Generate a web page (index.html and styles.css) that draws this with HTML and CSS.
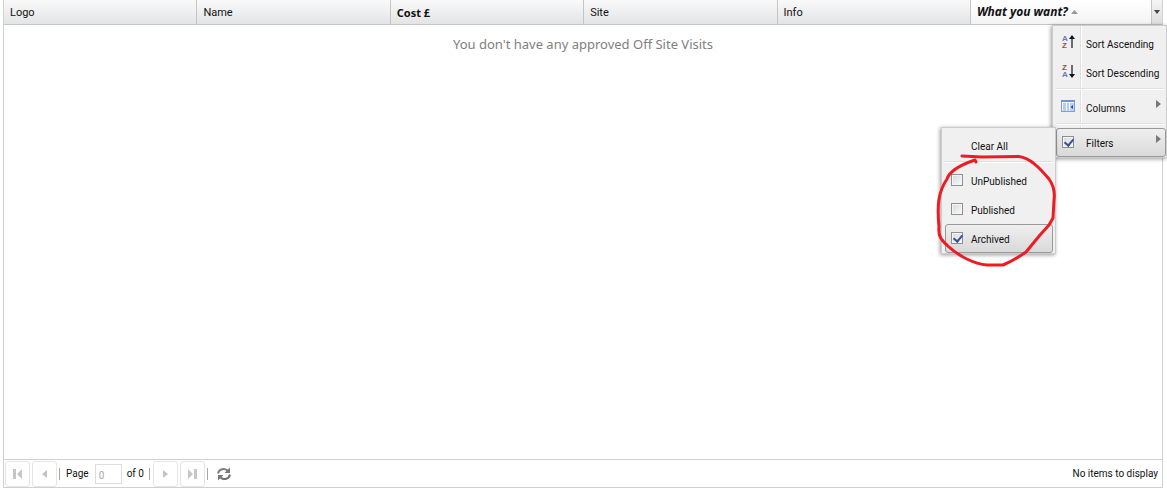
FILE: index.html
```html
<!DOCTYPE html>
<html lang="en">
<head>
  <meta charset="utf-8">
  <title>Off Site Visits</title>
  <link rel="stylesheet" href="styles.css">
</head>
<body>
  <div class="grid">
    <table class="grid-header">
      <thead>
        <tr>
          <th>Logo</th>
          <th>Name</th>
          <th class="bold">Cost £</th>
          <th>Site</th>
          <th>Info</th>
          <th class="sorted">
            <div class="sorted-inner">
              <span>What you want?</span>
              <svg class="sort-arrow" width="7" height="4" viewBox="0 0 7 4"><path d="M0 4L3.500 0L7 4Z" fill="#999"/></svg>
              <button class="trigger" aria-label="Column menu">
                <svg width="6" height="4" viewBox="0 0 6 4"><path d="M0 0H6L3 4Z" fill="#444"/></svg>
              </button>
            </div>
          </th>
        </tr>
      </thead>
    </table>

    <div class="grid-body">You don't have any approved Off Site Visits</div>

    <div class="paging">
      <button class="page-btn" aria-label="First page" disabled>
        <svg width="10" height="10" viewBox="0 0 10 10"><path d="M0 0H3V10H0ZM9 0V10L4 5Z" fill="#c6c6c6"/></svg>
      </button>
      <button class="page-btn" aria-label="Previous page" disabled>
        <svg width="10" height="10" viewBox="0 0 10 10"><path d="M7 1V9L2 5Z" fill="#c3c3c3"/></svg>
      </button>
      <span class="divider"></span>
      <label class="page-label" for="page">Page</label>
      <input class="page-input" id="page" type="text" value="0" disabled>
      <span class="page-total">of 0</span>
      <span class="divider"></span>
      <button class="page-btn" aria-label="Next page" disabled>
        <svg width="10" height="10" viewBox="0 0 10 10"><path d="M3 1V9L8 5Z" fill="#c3c3c3"/></svg>
      </button>
      <button class="page-btn" aria-label="Last page" disabled>
        <svg width="10" height="10" viewBox="0 0 10 10"><path d="M1 0V10L6 5ZM7 0H10V10H7Z" fill="#c6c6c6"/></svg>
      </button>
      <span class="divider"></span>
      <button class="refresh" aria-label="Refresh">
        <svg width="14" height="14" viewBox="0 0 14 14">
          <path d="M1 6.500C2 2 7 0.500 10.500 3.500" fill="none" stroke="#808080" stroke-width="2"/>
          <path d="M13 0.500V6H7.500Z" fill="#777"/>
          <path d="M13 7.500C12 12 7 13.500 3.500 10.500" fill="none" stroke="#707070" stroke-width="2"/>
          <path d="M1 13.500V8H6.500Z" fill="#777"/>
        </svg>
      </button>
      <span class="status">No items to display</span>
    </div>

    <div class="menu column-menu">
      <button class="item">
        <svg class="icon" width="14" height="16" viewBox="0 0 14 16" aria-hidden="true">
          <text class="letter-a" x="1" y="7">A</text>
          <text class="letter-z" x="1" y="14">Z</text>
          <path d="M11 14V3" stroke="#223" stroke-width="1.300"/>
          <path d="M8 5L11 1L14 5Z" fill="#112"/>
        </svg>
        <span>Sort Ascending</span>
      </button>
      <button class="item">
        <svg class="icon" width="14" height="16" viewBox="0 0 14 16" aria-hidden="true">
          <text class="letter-z" x="1" y="7">Z</text>
          <text class="letter-a" x="1" y="14">A</text>
          <path d="M11 2V13" stroke="#223" stroke-width="1.300"/>
          <path d="M8 11H14L11 15Z" fill="#112"/>
        </svg>
        <span>Sort Descending</span>
      </button>
      <div class="separator"></div>
      <button class="item">
        <svg class="icon" width="14" height="12" viewBox="0 0 14 12">
          <rect x="0.500" y="0.500" width="13" height="11" fill="#f4f8ff" stroke="#7f9fe0"/>
          <path d="M0 0H14V2H0Z" fill="#6f92d8"/>
          <path d="M2 4H5M2 6H5M2 8H5M2 10H5M6 4H8M6 6H8M6 8H8M6 10H8" stroke="#7f9bdc"/>
          <path d="M9 3H13V11H9Z" fill="#bcd0f6"/>
          <path d="M12 5V9L9.500 7Z" fill="#2b4fa5"/>
        </svg>
        <span>Columns</span>
        <svg class="more" width="5" height="8" viewBox="0 0 5 8"><path d="M0 0L5 4L0 8Z" fill="#777"/></svg>
      </button>
      <div class="separator"></div>
      <label class="item active">
        <input class="check" type="checkbox" checked>
        <span>Filters</span>
        <svg class="more" width="5" height="8" viewBox="0 0 5 8"><path d="M0 0L5 4L0 8Z" fill="#777"/></svg>
      </label>

      <div class="menu filter-menu">
        <button class="item no-icon"><span>Clear All</span></button>
        <div class="separator"></div>
        <label class="item"><input class="check" type="checkbox"><span>UnPublished</span></label>
        <label class="item"><input class="check" type="checkbox"><span>Published</span></label>
        <label class="item active"><input class="check" type="checkbox" checked><span>Archived</span></label>
        <svg class="marker" width="122" height="116" viewBox="0 0 122 116">
          <path d="M26 6L46 7L83 6.500C94 8 103 17 113 29C118 36 119 43 118 50L117 68L113 75L104 85L90 102C80 109 74 112 67 115H51C38 114 23 106 13 97C5 90 2 86 3 77C1 56 2 42 11 29C14 20 27 14 39 10L40 12" fill="none" stroke="#ed1c24" stroke-width="3" stroke-linecap="round" stroke-linejoin="round"/>
        </svg>
      </div>
    </div>
  </div>
</body>
</html>
```

FILE: styles.css
```css
* {
  box-sizing: border-box;
}

body {
  margin: 0;
  padding: 0 4px 13px 3px;
  min-height: 100vh;
  display: flex;
  background: #fff;
  color: #111;
  font: 11px/14px Tahoma, Roboto, sans-serif;
}

button {
  font: inherit;
  color: inherit;
  border: 0;
  padding: 0;
  background: none;
}

.grid {
  position: relative;
  flex: 1;
  display: flex;
  flex-direction: column;
  border: 1px solid #d0d0d0;
  border-top: 0;
}

.grid-header {
  width: 100%;
  table-layout: fixed;
  border-collapse: separate;
  border-spacing: 0;
}

.grid-header th {
  width: 16.7%;
  height: 25px;
  padding: 1px 6px 0;
  text-align: left;
  font-weight: normal;
  border-right: 1px solid #c5c5c5;
  border-bottom: 1px solid #c5c5c5;
  background: linear-gradient(#f9f9f9, #e3e4e6);
}

.grid-header .bold {
  font-family: Tahoma, "Noto Sans", sans-serif;
  font-weight: bold;
}

.grid-header .sorted {
  width: auto;
  padding-top: 0;
  padding-right: 0;
  border-right: 0;
  font-family: Tahoma, "Noto Sans", sans-serif;
  font-size: 12px;
  font-weight: bold;
  font-style: italic;
  background: linear-gradient(#fff, #f4f4f4);
}

.sorted-inner {
  display: flex;
  align-items: center;
  gap: 3px;
  height: 24px;
}

.trigger {
  display: flex;
  align-items: center;
  justify-content: center;
  width: 11px;
  height: 24px;
  margin-left: auto;
  border-left: 1px solid #c5c5c5;
  background: linear-gradient(#f4f4f4, #ddd);
}

.grid-body {
  flex: 1;
  padding-top: 10px;
  text-align: center;
  color: #808080;
  font-family: Tahoma, "Noto Sans", sans-serif;
  font-size: 13px;
  line-height: 18px;
}

.paging {
  display: flex;
  align-items: center;
  height: 28px;
  padding: 0 4px 0 1px;
  border-top: 1px solid #d0d0d0;
  font-size: 10px;
}

.page-btn {
  display: flex;
  align-items: center;
  justify-content: center;
  width: 25px;
  height: 26px;
  margin-right: 2px;
  border: 1px solid #e5e5e5;
  border-radius: 3px;
}

.divider {
  width: 1px;
  height: 12px;
  background: #aca899;
}

.page-label {
  margin: 0 6px 0 6px;
}

.page-input {
  width: 27px;
  height: 20px;
  padding: 4px 3px 0;
  border: 1px solid #ddd;
  background: #fff;
  color: #aaa;
  font: inherit;
}

.page-total {
  margin: 0 5px;
}

.page-total + .divider {
  margin-right: 3px;
}

.refresh {
  display: flex;
  margin-left: 9px;
}

.status {
  margin-left: auto;
}

/* menus */
.menu {
  position: absolute;
  padding: 3px 0 0 3px;
  width: 115px;
  border: 1px solid #ccc;
  background: #f0f0f0;
  box-shadow: -1px 1px 4px rgba(0, 0, 0, 0.4);
  font-size: 10px;
}

.column-menu {
  top: 25px;
  right: -5px;
  background: linear-gradient(90deg, #f0f0f0 27px, #e0e0e0 27px, #e0e0e0 28px, #fff 28px, #fff 29px, #f0f0f0 29px);
}

.filter-menu {
  top: 101px;
  right: 110px;
}

.item {
  display: flex;
  align-items: center;
  width: 110px;
  height: 29px;
  padding: 2px 4px 0 4px;
  border: 1px solid transparent;
  border-radius: 3px;
  text-align: left;
  white-space: nowrap;
}

.filter-menu .item {
  width: 108px;
}

.item.active {
  border-color: #999;
  background: linear-gradient(#efefef, #d9d9d9);
}

.item.no-icon {
  padding-left: 25px;
}

.icon {
  flex: none;
  width: 14px;
  margin: 0 11px 6px 0;
  overflow: visible;
}

.letter-a,
.letter-z {
  font: bold 8px "Liberation Sans", sans-serif;
  fill: #6678c0;
}

.letter-z {
  fill: #a5484f;
}

.more {
  margin: 0 0 10px auto;
}

.check {
  appearance: none;
  flex: none;
  width: 12px;
  height: 12px;
  margin: 0 8px 4px 1px;
  border: 1px solid #8e8f8f;
  background: linear-gradient(135deg, #d5d9de, #fafafa);
  box-shadow: inset 0 0 0 1px #f4f4f4;
}

.column-menu > .item .check {
  margin-right: 12px;
}

.check:checked::after {
  content: "";
  display: block;
  width: 4px;
  height: 7px;
  margin: 0 0 0 3px;
  border: solid #3c4f9c;
  border-width: 0 2px 2px 0;
  transform: rotate(40deg);
}

.separator {
  height: 2px;
  margin: 1px 2px 3px 0;
  border-top: 1px solid #e0e0e0;
  background: #fff;
}

/* red pen mark round the filter options */
.marker {
  position: absolute;
  top: 22px;
  left: -6px;
  overflow: visible;
  pointer-events: none;
}
```
